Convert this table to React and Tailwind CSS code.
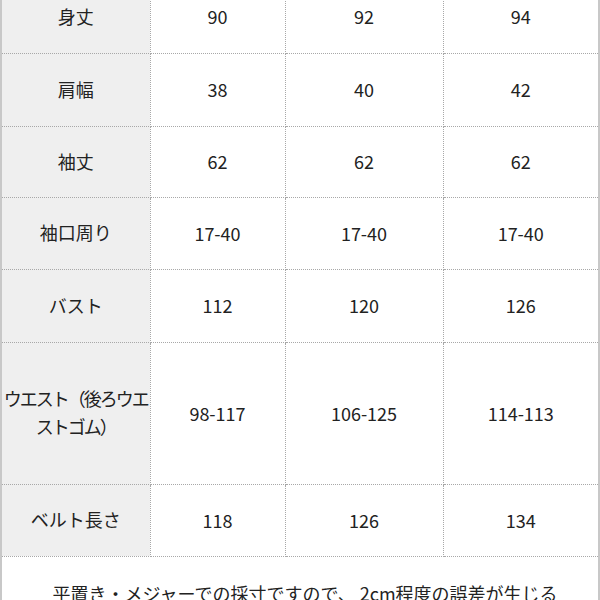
const rows = [
  { label: "身丈", values: ["90", "92", "94"], h: "h-[72px]" },
  { label: "肩幅", values: ["38", "40", "42"], h: "h-[73px]" },
  { label: "袖丈", values: ["62", "62", "62"], h: "h-[71px]" },
  { label: "袖口周り", values: ["17-40", "17-40", "17-40"], h: "h-[72px]" },
  { label: "バスト", values: ["112", "120", "126"], h: "h-[73px]" },
  {
    label: (
      <span className="tracking-[-2px]">
        ウエスト（後ろウエ
        <br />
        ストゴム）
      </span>
    ),
    key: "waist",
    values: ["98-117", "106-125", "114-113"],
    h: "h-[142px]",
  },
  { label: "ベルト長さ", values: ["118", "126", "134"], h: "h-[72px]" },
];

const App = () => {
  return (
    <div
      className="w-[600px] h-[600px] overflow-hidden bg-white text-[#222] text-[18px]"
      style={{ fontFamily: '"Noto Sans CJK JP", "Noto Sans", sans-serif' }}
    >
      <div className="border-l-[2px] border-r-[2px] border-[#c8c8c8] -mt-[19px]">
        <table className="w-[596px] border-collapse table-fixed">
          <colgroup>
            <col className="w-[148px]" />
            <col className="w-[135px]" />
            <col className="w-[158px]" />
            <col className="w-[155px]" />
          </colgroup>
          <tbody>
            {rows.map((row) => (
              <tr key={row.key || row.label} className={row.h}>
                <th className="bg-[#efefef] font-normal text-center leading-[1.55] px-0 border-b border-r border-dotted border-[#a8a8a8]">
                  {row.label}
                </th>
                {row.values.map((v, i) => (
                  <td
                    key={i}
                    className={
                      i === 2
                        ? "text-center border-b border-dotted border-[#a8a8a8]"
                        : "text-center border-b border-r border-dotted border-[#a8a8a8]"
                    }
                  >
                    {v}
                  </td>
                ))}
              </tr>
            ))}
            <tr>
              <td colSpan={4} className="pt-[22px] pb-4 pl-[10px] text-center leading-[1.6]">
                平置き・メジャーでの採寸ですので、 2cm程度の誤差が生じる
              </td>
            </tr>
          </tbody>
        </table>
      </div>
    </div>
  );
};

export default App;
